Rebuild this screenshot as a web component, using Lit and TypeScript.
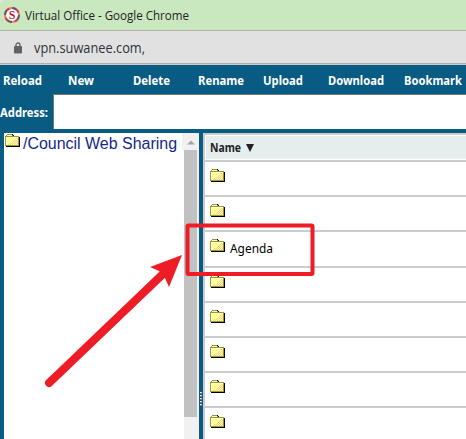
import { LitElement, html, css, svg } from "lit";

const folder = () => html`<svg class="folder" width="15" height="13" viewBox="0 0 15 13" shape-rendering="crispEdges">
  <path fill="#000" d="M7 0h1v1h1v1H7zM14 3h1v10H1v-1h13z"/>
  <path fill="#999933" d="M2 0h5v1h1v1h6v10H0V2h1V1h1z"/>
  <path fill="#ffffcc" d="M2 1h5v1H2zM1 3h12v1H2v7H1z"/>
  <path fill="#ffff99" d="M2 4h11v7H2z"/>
  <path fill="#ffcc99" d="M11 4h1v1h-1zM10 5h1v1h-1zM12 5h1v1h-1zM9 6h1v1H9zM11 6h1v1h-1zM8 7h1v1H8zM10 7h1v1h-1zM12 7h1v1h-1zM7 8h1v1H7zM9 8h1v1H9zM11 8h1v1h-1zM4 9h1v1H4zM6 9h1v1H6zM8 9h1v1H8zM10 9h1v1h-1zM12 9h1v1h-1zM3 10h1v1H3zM5 10h1v1H5zM7 10h1v1H7zM9 10h1v1H9zM11 10h1v1h-1z"/>
</svg>`;

class AppRoot extends LitElement {
  static styles = css`
    :host { display: block; position: relative; width: 466px; height: 439px; overflow: hidden; background: #085b82; font-family: "Noto Sans", sans-serif; }
    * { box-sizing: border-box; }
    svg { display: block; flex: none; overflow: visible; }
    .title { height: 31px; background: radial-gradient(circle at 8px 8px, #cae8bf 8px, #dfe6dc 9px) 0 0 / 8px 8px no-repeat, #cae8bf; border-bottom: 1px solid #a9b3a6; display: flex; align-items: center; padding-left: 4px; }
    .title span { margin-left: 5px; }
    .url { height: 34px; background: #e1e1e1; border-bottom: 1px solid #ccc; box-shadow: inset 0 -1px #aeaeae; display: flex; align-items: center; padding-left: 14px; }
    .url span { margin-left: 12px; }
    .tools { height: 29px; display: flex; align-items: center; padding-left: 3px; }
    .address { height: 35px; display: flex; }
    .label { width: 53px; display: flex; align-items: center; }
    .field { flex: 1; background: #fff; border-top: 1px solid #767676; border-left: 1px solid #767676; }
    .main { display: flex; height: 306px; margin-top: 4px; }
    .tree { width: 195px; margin-left: 4px; background: #fff; display: flex; justify-content: space-between; }
    .root { display: flex; }
    .root .folder { margin: 1px 3px 0 1px; }
    .bar { width: 17px; background: linear-gradient(90deg, #fff 2px, #f1f1f1 2px); }
    .up { height: 17px; padding: 7px 0 0 5px; background: #f1f1f1; }
    .thumb { height: 267px; width: 13px; margin-left: 2px; background: #c1c1c1; }
    .split { width: 4px; padding: 259px 0 0 1px; }
    .list { flex: 1; background: #fff; border-top: 2px solid #ccc; border-left: 2px solid #ccc; }
    .head { height: 25px; background: #e5eeed; border: solid #fff; border-width: 1px 0 1px 1px; display: flex; align-items: center; padding-left: 4px; }
    .row { height: 35px; border-top: 2px solid #ccc; padding: 7px 0 0 5px; display: flex; }
    .row.tall { height: 36px; }
    .row .text { margin-left: 5px; }
    .over { position: absolute; left: 0; top: 0; }
  `;

  label(t: string, w: number, size: number, color: string, bold = false, family = "Noto Sans", box = 20, base = 15) {
    return html`<svg width=${w} height=${box}>${svg`<text x="0" y=${base} textLength=${w} lengthAdjust="spacingAndGlyphs" fill=${color} font-family=${family} font-size=${size} font-weight=${bold ? 700 : 400}>${t}</text>`}</svg>`;
  }

  render() {
    const tools: [string, number, number][] = [["Reload", 38, 27], ["New", 25, 40], ["Delete", 36, 29], ["Rename", 45, 20], ["Upload", 39, 26], ["Download", 55, 21], ["Bookmark", 57, 0]];
    return html`
      <div class="title">
        <svg width="16" height="16" viewBox="0 0 16 16">
          <circle cx="8" cy="8" r="7" fill="#fff" stroke="#e8825a" stroke-width="2"/>
          <circle cx="8" cy="8" r="7" fill="none" stroke="#5b5674" stroke-width="2" stroke-dasharray="5 6"/>
          <circle cx="8" cy="8" r="7" fill="none" stroke="#d83a40" stroke-width="2" stroke-dasharray="3 8" stroke-dashoffset="-5"/>
          <text x="8" y="12" text-anchor="middle" font-family="Liberation Serif" font-size="12" font-weight="700" fill="#c4142c">S</text>
        </svg>
        <span>${this.label("Virtual Office - Google Chrome", 164, 12, "#222", false, "Open Sans", 20, 15)}</span>
      </div>
      <div class="url">
        <svg width="8" height="12" viewBox="0 0 8 12"><path d="M2 5V3a2 2 0 0 1 4 0v2" fill="none" stroke="#5f6368" stroke-width="1.3"/><rect y="4" width="8" height="7.5" rx="1" fill="#5f6368"/></svg>
        <span>${this.label("vpn.suwanee.com,", 111, 14, "#303238", false, "Open Sans", 20, 15)}</span>
      </div>
      <div class="tools">
        ${tools.map(([t, w, gap]) => html`${this.label(t, w + 1, 11.5, "#fff", true)}<svg width=${Math.max(0, gap - 1)} height="1"></svg>`)}
      </div>
      <div class="address"><div class="label">${this.label("Address:", 48, 11.5, "#fff", true)}</div><div class="field"></div></div>
      <div class="main">
        <div class="tree">
          <div class="root">${folder()}<span>${this.label("/Council Web Sharing", 154, 16, "#14288c", false, "Liberation Sans", 22, 16)}</span></div>
          <div class="bar"><div class="up"><svg width="8" height="5"><path d="M0 4.5 4 .5l4 4z" fill="#a3a3a3"/></svg></div><div class="thumb"></div></div>
        </div>
        <div class="split"><svg width="3" height="15" shape-rendering="crispEdges">${[0, 3, 6, 9, 12].map(y => svg`<rect y=${y} width="2" height="2" fill="#777"/><rect y=${y} width="1" height="1" fill="#fff"/><rect x="1" y=${y} width="1" height="1" fill="#ccc"/>`)}</svg></div>
        <div class="list">
          <div class="head">${this.label("Name", 31, 11.5, "#222", true, "Noto Sans", 20, 14)}<svg width="14" height="12"><path d="M5 2h8l-4 8z" fill="#222"/></svg></div>
          ${[0, 1, 2, 3, 4, 5, 6, 7].map(i => html`<div class="row ${i === 2 ? "tall" : ""}">${folder()}${i === 2 ? html`<span class="text">${this.label("Agenda", 43, 12.5, "#000", false, "Noto Sans", 20, 14)}</span>` : ""}</div>`)}
        </div>
      </div>
      <svg class="over" width="466" height="439">
        <rect x="187.5" y="225.5" width="125" height="48.5" rx="1" fill="none" stroke="#ee1c25" stroke-width="4"/>
        <path d="M49 383 164 273" stroke="#ee1c25" stroke-width="8" stroke-linecap="round"/>
        <path d="M182 255 150 267l9 4 6 7 4 9z" fill="#ee1c25"/>
      </svg>
    `;
  }
}
customElements.define("app-root", AppRoot);
